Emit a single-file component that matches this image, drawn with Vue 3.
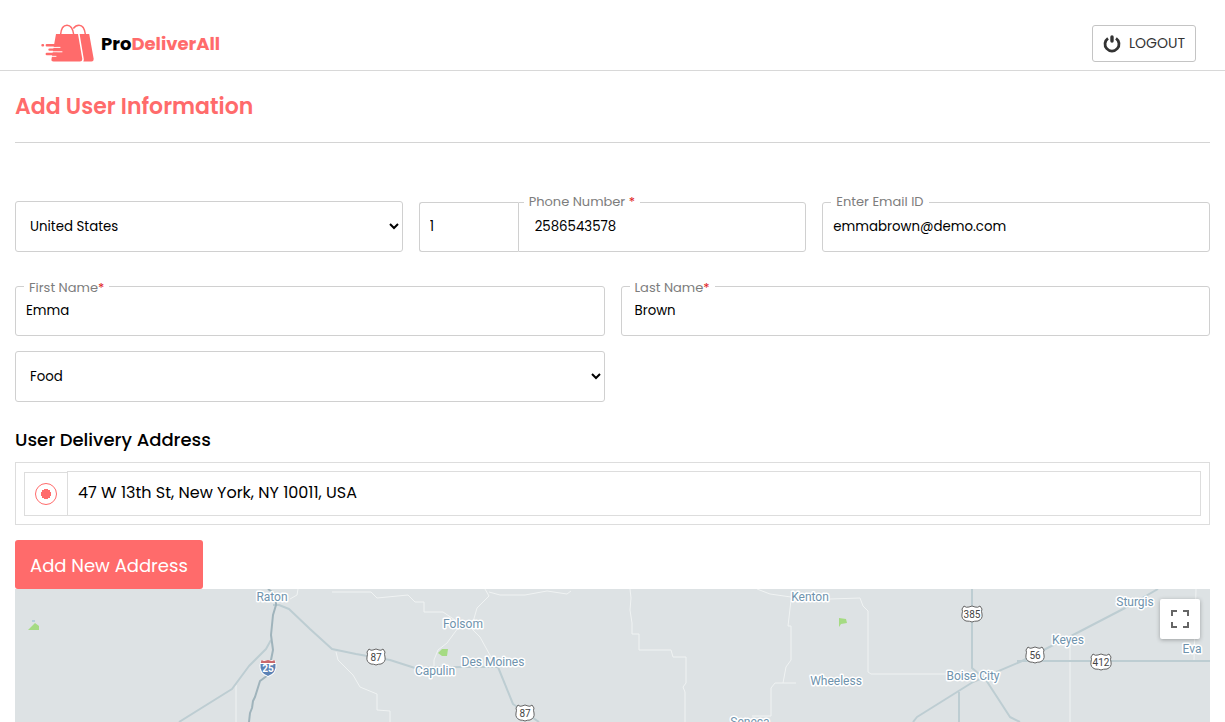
<template>
    <div class="page">
        <header class="top_bar">
            <a href="#" class="logo">
                <svg class="logo_img" viewBox="0 0 53 38" aria-hidden="true">
                    <g fill="none" stroke="#ff6b6b" stroke-width="1.5">
                        <path d="M19.5 11C20 5 22.500 1.300 26 1.300S32 5 32.800 11" />
                        <path d="M32.300 4.500C34 2.300 35.800 1.300 38 1.300C41.500 1.300 43.800 5 44.500 11" />
                    </g>
                    <path fill="#ff6b6b" d="M15 10H37L41.300 35Q41.300 37.500 39 37.500H12.500Q10 37.500 10.500 35Z" />
                    <path fill="#ff6b6b" d="M38.600 10H48.200L52.700 35Q52.700 37.500 50.500 37.500H42.300Q43.200 36 42.700 34.500Z" />
                    <g fill="none" stroke-linecap="round">
                        <path stroke="#fff" stroke-width="1" d="M10 23.400H19M10 27.800H21M9 32.300H15" />
                        <path stroke="#ff6b6b" stroke-width="2.400" d="M1.500 21.200H2M5.800 21.200H15M8.500 25.600H16M5.800 30H16" />
                    </g>
                </svg>
                <span class="logo_name">Pro<em>DeliverAll</em></span>
            </a>
            <button type="button" class="logout">
                <svg viewBox="0 0 18 18" aria-hidden="true">
                    <path d="M5 3.300A7 7 0 1 0 13 3.300" fill="none" stroke="#333" stroke-width="2.800" />
                    <path d="M9 0.500V7" stroke="#fff" stroke-width="5" />
                    <path d="M9 2V6" stroke="#333" stroke-width="3.400" stroke-linecap="round" />
                </svg>
                LOGOUT
            </button>
        </header>

        <main class="contents">
            <h1>Add User Information</h1>

            <form @submit.prevent>
                <div class="row three">
                    <select v-model="form.country" class="control" aria-label="Country">
                        <option v-for="item in countries" :key="item">{{ item }}</option>
                    </select>
                    <div class="phone">
                        <input v-model="form.code" class="control code" type="text" aria-label="Country code">
                        <div class="field">
                            <label for="phone">Phone Number <i>*</i></label>
                            <input id="phone" v-model="form.phone" class="control number" type="text">
                        </div>
                    </div>
                    <div class="field">
                        <label for="email">Enter Email ID</label>
                        <input id="email" v-model="form.email" class="control" type="text">
                    </div>
                </div>

                <div class="row two names">
                    <div class="field">
                        <label for="first">First Name<i>*</i></label>
                        <input id="first" v-model="form.first" class="control" type="text">
                    </div>
                    <div class="field">
                        <label for="last">Last Name<i>*</i></label>
                        <input id="last" v-model="form.last" class="control last" type="text">
                    </div>
                </div>

                <div class="row two">
                    <select v-model="form.service" class="control" aria-label="Service">
                        <option v-for="item in services" :key="item">{{ item }}</option>
                    </select>
                </div>

                <h2>User Delivery Address</h2>
                <ul class="address_list">
                    <li v-for="item in addresses" :key="item.id">
                        <span class="pick">
                            <input :id="'address' + item.id" v-model="form.address" type="radio" name="address" :value="item.id">
                        </span>
                        <label :for="'address' + item.id">{{ item.text }}</label>
                    </li>
                </ul>
                <button type="button" class="add_address">Add New Address</button>
            </form>

            <div class="map">
                <svg class="map_canvas" viewBox="0 0 1195 133" preserveAspectRatio="xMidYMin slice" role="img" aria-label="Map">
                    <g class="park">
                        <path v-for="d in parks" :key="d" :d="d" />
                    </g>
                    <path fill="#b4cfdc" d="M17 31h3v2h-3z" />
                    <g class="local">
                        <polyline v-for="p in localRoads" :key="p" :points="p" />
                    </g>
                    <g class="highway">
                        <polyline v-for="p in highways" :key="p" :points="p" />
                    </g>
                    <polyline class="interstate" :points="interstate" />

                    <g v-for="s in shields" :key="s.x" class="shield" :transform="`translate(${s.x} ${s.y})`">
                        <path :d="s.wide ? wideShield : shield" />
                        <text y="4">{{ s.text }}</text>
                    </g>
                    <g class="shield_25" transform="translate(253 79)">
                        <path fill="#fff" d="M-7 -8H7L8.500 -3Q9 6 0 9Q-9 6 -8.500 -3Z" />
                        <path fill="#c9696c" d="M-6.500 -8L-4 -7L0 -8L4 -7L6.500 -8L7.300 -5H-7.300Z" />
                        <path fill="#5b82b5" d="M-7.500 -4H7.500Q8.500 5 0 8Q-8.500 5 -7.500 -4Z" />
                        <text y="4">25</text>
                    </g>

                    <g class="place">
                        <text v-for="p in places" :key="p.name" :x="p.x" :y="p.y">{{ p.name }}</text>
                    </g>
                </svg>
                <button type="button" class="fullscreen" aria-label="Toggle fullscreen view">
                    <svg viewBox="0 0 18 18" aria-hidden="true">
                        <path d="M0 0H6V2H2V6H0ZM12 0H18V6H16V2H12ZM0 12H2V16H6V18H0ZM16 12H18V18H12V16H16Z" fill="#666" />
                    </svg>
                </button>
            </div>
        </main>
    </div>
</template>

<script setup>
import {reactive} from 'vue'

const countries = ['United States', 'Canada', 'United Kingdom']
const services = ['Food', 'Grocery', 'Pharmacy']
const addresses = [
    {id: 1, text: '47 W 13th St, New York, NY 10011, USA'},
]

const form = reactive({
    country: 'United States',
    code: '1',
    phone: '2586543578',
    email: 'emmabrown@demo.com',
    first: 'Emma',
    last: 'Brown',
    service: 'Food',
    address: 1,
})

// map data
const parks = [
    'M13 41L20 34L24 37V41Z',
    'M423 64L427 60H433L432 67H427Z',
    'M824 29L831 30L832 34L826 35L824 38Z',
]

const interstate = '253,0 261,6 261,16 258,26 256,46 258,61 256,71 253,86 245,92 240,108 238,112 237,119 235,124 234,133'

const highways = [
    '256,51 251,60 234,77 217,100 164,133',
    '258,16 264,16 274,20 295,40 317,60 341,65 375,71 400,79 447,78 483,78 498,115 524,133',
    '957,0 957,79 971,91 995,128 1005,133',
    '1143,0 1110,19 1058,46 1007,72 958,93 902,128 898,133',
    '944,103 944,133',
    '1002,72 1195,72',
]

const localRoads = [
    '221,96 221,133',
    '283,0 282,6 275,10',
    '317,3 356,3 362,9 393,6 400,13 409,13 409,23 428,23 440,31 443,39 432,54 423,61 419,71 419,79',
    '470,0 474,7 462,19 458,33',
    '474,3 485,6 510,6 532,2 552,5 556,2',
    '456,39 465,48 476,68 483,78',
    '321,63 323,71 338,86 345,98 362,105 362,121 375,122 375,133',
    '615,0 616,9 615,21 617,34 617,45 624,45 624,61 656,61 658,68 671,68 671,94 668,98 670,103 670,133',
    '742,0 755,5 776,8 815,10 845,9 848,17 853,22 853,83 856,85 932,85',
    '776,11 773,37 776,37 776,71 771,78 768,94',
    '781,94 760,94 756,99 756,127 737,127',
    '1055,48 1055,133',
    '1181,0 1179,72',
]

const shield = 'M-7 -8Q-5 -6 -3 -7L0 -8L3 -7Q5 -6 7 -8L9 -5Q8 -3 9 0Q10 5 5 7Q2 7 0 8Q-2 7 -5 7Q-10 5 -9 0Q-8 -3 -9 -5Z'
const wideShield = 'M-8 -8Q-6 -6 -3 -7L0 -8L3 -7Q6 -6 8 -8L10 -5Q9 -3 10 0Q11 5 6 7Q2 7 0 8Q-2 7 -6 7Q-11 5 -10 0Q-9 -3 -10 -5Z'

const shields = [
    {x: 361, y: 68, text: '87'},
    {x: 510, y: 124, text: '87'},
    {x: 957, y: 25, text: '385', wide: true},
    {x: 1020, y: 66, text: '56'},
    {x: 1086, y: 73, text: '412', wide: true},
]

const places = [
    {name: 'Raton', x: 257, y: 12},
    {name: 'Folsom', x: 448, y: 39},
    {name: 'Capulin', x: 420, y: 86},
    {name: 'Des Moines', x: 478, y: 77},
    {name: 'Kenton', x: 795, y: 12},
    {name: 'Wheeless', x: 821, y: 96},
    {name: 'Seneca', x: 735, y: 137},
    {name: 'Sturgis', x: 1120, y: 17},
    {name: 'Keyes', x: 1053, y: 55},
    {name: 'Boise City', x: 958, y: 91},
    {name: 'Eva', x: 1177, y: 64},
]
</script>

<style>
body {
    margin: 0;
    background: #fff;
}
</style>

<style scoped>
.page {
    display: flex;
    flex-direction: column;
    min-height: 100vh;
    font-family: Poppins, Inter, sans-serif;
    font-size: 14px;
    color: #000;
}

.page * {
    box-sizing: border-box;
}

button,
input,
select {
    font-family: inherit;
    color: inherit;
}

/* header */
.top_bar {
    display: flex;
    justify-content: space-between;
    align-items: flex-end;
    padding: 24px 29px 8px 41px;
    border-bottom: 1px solid #d8d8d8;
}

.logo {
    display: flex;
    align-items: center;
    gap: 7px;
    color: #000;
    text-decoration: none;
}

.logo_img {
    width: 53px;
    height: 38px;
}

.logo_name {
    font-size: 18px;
    font-weight: 700;
}

.logo_name em {
    font-style: normal;
    color: #ff6b6b;
}

.logout {
    display: flex;
    align-items: center;
    gap: 8px;
    height: 37px;
    padding: 0 10px;
    border: 1px solid #c4c4c4;
    border-radius: 3px;
    background: #fff;
    font-size: 14px;
    color: #333;
}

.logout svg {
    width: 18px;
    height: 18px;
}

/* form */
.contents {
    display: flex;
    flex-direction: column;
    flex: 1;
    padding: 0 15px;
}

h1 {
    margin: 0 0 58px;
    padding: 20px 0;
    border-bottom: 1px solid #d4d4d4;
    font-size: 22px;
    line-height: 31px;
    font-weight: 600;
    color: #ff6b6b;
}

.row {
    display: grid;
    column-gap: 16px;
    align-items: end;
    margin-bottom: 15px;
}

.three {
    grid-template-columns: repeat(3, 1fr);
}

.two {
    grid-template-columns: repeat(2, 1fr);
}

.names {
    margin-top: 34px;
}

.control {
    display: block;
    width: 100%;
    height: 50px;
    padding: 0 10px;
    border: 1px solid #d0d0d0;
    border-radius: 3px;
    background: #fff;
    outline: none;
}

select.control {
    height: 51px;
}

.last {
    padding-left: 13px;
}

.phone {
    display: flex;
}

.phone .field {
    flex: 1;
}

.code {
    width: 99px;
    border-right: 0;
    border-radius: 3px 0 0 3px;
}

.number {
    padding-left: 16px;
    border-radius: 0 3px 3px 0;
}

.field {
    position: relative;
}

.field label {
    position: absolute;
    top: -10px;
    left: 9px;
    padding: 0 5px;
    background: #fff;
    font-size: 13px;
    line-height: 20px;
    color: #7d7d7d;
}

.phone label {
    left: 6px;
}

.names label {
    top: -8px;
}

.field i {
    font-style: normal;
    color: #e02020;
}

/* address */
h2 {
    margin: 25px 0 9px;
    font-size: 18px;
    line-height: 26px;
    font-weight: 500;
}

.address_list {
    margin: 0 0 15px;
    padding: 8px;
    border: 1px solid #ddd;
    list-style: none;
}

.address_list li {
    display: flex;
    align-items: flex-end;
}

.pick {
    display: flex;
    align-items: center;
    justify-content: center;
    width: 43px;
    height: 44px;
    border: 1px solid #ddd;
    border-right: 0;
}

.pick input {
    width: 22px;
    height: 22px;
    margin: 0;
    border: 1px solid #ff6b6b;
    border-radius: 50%;
    background: #fff;
    appearance: none;
}

.pick input:checked {
    background: radial-gradient(circle, #ff6b6b 5px, #fff 5px);
}

.address_list label {
    flex: 1;
    padding: 0 10px 2px;
    border: 1px solid #ddd;
    font-size: 16px;
    line-height: 41px;
}

.add_address {
    display: block;
    height: 49px;
    padding: 2px 15px 0;
    border: 0;
    border-radius: 3px;
    background: #ff6b6b;
    font-size: 18px;
    color: #fff;
}

/* map */
.map {
    position: relative;
    flex: 1;
    min-height: 133px;
    overflow: hidden;
    background: #dde2e4;
}

.map_canvas {
    display: block;
    width: 100%;
    height: 100%;
    font-family: Roboto, sans-serif;
}

.park {
    fill: #a5db83;
}

.local,
.highway,
.interstate {
    fill: none;
    stroke-linejoin: round;
}

.local {
    stroke: #f0f3f3;
    stroke-width: 1;
}

.highway {
    stroke: #bdcdd2;
    stroke-width: 2;
}

.interstate {
    stroke: #9fb3bb;
    stroke-width: 2;
}

.shield path {
    fill: #fff;
    stroke: #666;
    stroke-width: 1;
}

.shield text {
    font-size: 10px;
    text-anchor: middle;
    fill: #444;
}

.shield_25 text {
    font-size: 10px;
    font-weight: 700;
    text-anchor: middle;
    fill: #fff;
}

.place text {
    font-size: 12px;
    text-anchor: middle;
    fill: #6f93ad;
    stroke: #fff;
    stroke-width: 3px;
    stroke-linejoin: round;
    paint-order: stroke;
}

.fullscreen {
    position: absolute;
    top: 10px;
    right: 10px;
    display: flex;
    align-items: center;
    justify-content: center;
    width: 40px;
    height: 40px;
    padding: 0;
    border: 0;
    border-radius: 2px;
    background: #fff;
    box-shadow: 0 1px 4px rgba(0, 0, 0, 0.3);
}

.fullscreen svg {
    width: 18px;
    height: 18px;
}
</style>
